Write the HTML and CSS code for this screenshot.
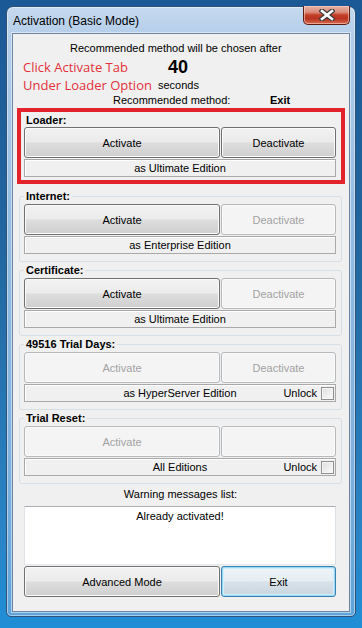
FILE: index.html
```html
<!DOCTYPE html>
<html lang="en">
<head>
<meta charset="utf-8">
<title>Activation (Basic Mode)</title>
<link rel="stylesheet" href="styles.css">
</head>
<body>
<div class="window">
  <div class="titlebar">
    <span class="title">Activation (Basic Mode)</span>
    <button class="close" aria-label="Close">
      <svg width="16" height="12" viewBox="0 0 16 12">
        <path d="M3 2 L13 10 M13 2 L3 10" stroke="#3b3b3b" stroke-width="5" stroke-linecap="square" fill="none"/>
        <path d="M3 2 L13 10 M13 2 L3 10" stroke="#ffffff" stroke-width="2.6" stroke-linecap="square" fill="none"/>
      </svg>
    </button>
  </div>
  <div class="client">
    <div class="intro">Recommended method will be chosen after</div>
    <div class="countdown">
      <span class="note">Click Activate Tab</span><span class="count">40</span>
      <span class="note">Under Loader Option</span><span class="secs">seconds</span>
    </div>
    <div class="recommend"><span class="rec-label">Recommended method:</span><span class="rec-value">Exit</span></div>

    <div class="highlight">
      <fieldset class="loader">
        <legend>Loader:</legend>
        <div class="btn-row"><button class="btn">Activate</button><button class="btn">Deactivate</button></div>
        <div class="edition"><span></span><span>as Ultimate Edition</span><span></span></div>
      </fieldset>
    </div>

    <fieldset class="group">
      <legend>Internet:</legend>
      <div class="btn-row"><button class="btn">Activate</button><button class="btn" disabled>Deactivate</button></div>
      <div class="edition"><span></span><span>as Enterprise Edition</span><span></span></div>
    </fieldset>

    <fieldset class="group">
      <legend>Certificate:</legend>
      <div class="btn-row"><button class="btn">Activate</button><button class="btn" disabled>Deactivate</button></div>
      <div class="edition"><span></span><span>as Ultimate Edition</span><span></span></div>
    </fieldset>

    <fieldset class="group">
      <legend>49516 Trial Days:</legend>
      <div class="btn-row"><button class="btn" disabled>Activate</button><button class="btn" disabled>Deactivate</button></div>
      <div class="edition"><span></span><span>as HyperServer Edition</span><span class="unlock">Unlock<span class="check"></span></span></div>
    </fieldset>

    <fieldset class="group">
      <legend>Trial Reset:</legend>
      <div class="btn-row"><button class="btn" disabled>Activate</button><button class="btn" disabled></button></div>
      <div class="edition"><span></span><span>All Editions</span><span class="unlock">Unlock<span class="check"></span></span></div>
    </fieldset>

    <div class="warn-title">Warning messages list:</div>
    <div class="messages">Already activated!</div>
    <div class="btn-row bottom-row"><button class="btn">Advanced Mode</button><button class="btn default">Exit</button></div>
  </div>
</div>
</body>
</html>
```

FILE: styles.css
```css
html, body {
  margin: 0;
  padding: 0;
}

body {
  width: 362px;
  height: 628px;
  overflow: hidden;
  background: linear-gradient(180deg, #1b5996 0%, #22679f 40%, #2a84c6 85%, #1f8ed6 100%);
  font-family: "Liberation Sans", Arial, sans-serif;
  font-size: 11px;
  color: #000;
}

.window {
  box-sizing: border-box;
  width: 350px;
  height: 611px;
  margin: 6px 0 0 6px;
  border: 1px solid #2f5277;
  border-radius: 7px 7px 5px 5px;
  background: linear-gradient(180deg, #c6d9ee 0px, #b3cde9 30px, #94bde3 200px, #7fb1df 450px, #5ea4da 100%);
  padding: 0 5px 4px;
  display: flex;
  flex-direction: column;
  box-shadow: inset 0 0 0 1px rgba(255, 255, 255, 0.45);
}

.titlebar {
  height: 26px;
  display: flex;
  align-items: flex-start;
  justify-content: space-between;
}

.title {
  padding-left: 1px;
  margin-top: 7px;
  font-family: "Liberation Sans", Arial, sans-serif;
  font-size: 12px;
  line-height: 14px;
  color: #000;
}

.close {
  width: 47px;
  height: 19px;
  margin-top: -1px;
  padding: 0;
  border: 1px solid #5b1d12;
  border-top: none;
  border-radius: 0 0 5px 5px;
  background: linear-gradient(180deg, #e8b2a6 0%, #d98a79 35%, #c43f27 50%, #b93421 70%, #d9694d 100%);
  box-shadow: inset 0 0 0 1px rgba(255, 220, 210, 0.55);
  display: flex;
  align-items: center;
  justify-content: center;
}

.client {
  flex: 1;
  box-sizing: border-box;
  background: #f0f0f0;
  border: 1px solid #6a84a2;
  box-shadow: 0 0 0 1px rgba(255, 255, 255, 0.5);
  padding: 0 7px 0 6px;
  display: flex;
  flex-direction: column;
}

.intro {
  margin-top: 8px;
  height: 13px;
  line-height: 13px;
  padding-left: 51px;
}

.countdown {
  margin-top: 3px;
  padding-left: 4px;
  display: grid;
  grid-template-columns: 135px 40px;
  grid-template-rows: 19px 16px;
  align-items: center;
}

.note {
  color: #e3303b;
  font-family: "Open Sans", "Liberation Sans", sans-serif;
  font-size: 13px;
  line-height: 17px;
  white-space: nowrap;
}

.count {
  text-align: center;
  font-weight: bold;
  font-size: 18px;
  line-height: 19px;
}

.secs {
  text-align: center;
  line-height: 16px;
}

.recommend {
  margin-top: 1px;
  height: 13px;
  line-height: 13px;
  padding-left: 94px;
  display: flex;
}

.rec-label {
  width: 157px;
}

.rec-value {
  font-weight: bold;
}

.highlight {
  margin: 1px -3px 0 -2px;
  border: 4px solid #e3232b;
  padding: 2px 5px 3px 3px;
}

fieldset {
  margin: 0;
  min-width: 0;
}

legend {
  padding: 0 2px;
  font-weight: bold;
  line-height: 13px;
}

.loader {
  border: none;
  padding: 0;
}

.group {
  margin-top: 2px;
  border: 1px solid #d5dfe5;
  border-radius: 3px;
  padding: 1px 5px 7px 4px;
}

.highlight + .group {
  margin-top: 6px;
}

.btn-row {
  display: grid;
  grid-template-columns: 196px 115px;
  column-gap: 1px;
}

.btn {
  height: 31px;
  box-sizing: border-box;
  padding: 0;
  margin: 0;
  border: 1px solid #707070;
  border-radius: 3px;
  background: linear-gradient(180deg, #f2f2f2 0%, #ebebeb 48%, #dddddd 52%, #cfcfcf 100%);
  box-shadow: inset 0 0 0 1px #fbfbfb;
  font-family: "Liberation Sans", Arial, sans-serif;
  font-size: 11px;
  color: #000;
}

.btn:disabled {
  border-color: #b5b9bc;
  background: #f4f4f4;
  box-shadow: inset 0 0 0 1px #fafafa;
  color: #a2a2a2;
}

.btn.default {
  border-color: #3c7fb1;
  background: linear-gradient(180deg, #eef4f8 0%, #e6eef3 48%, #d7e1e8 52%, #c9d6df 100%);
  box-shadow: inset 0 0 0 1px #98d8f5, inset 0 0 0 2px #cdeefb;
}

.edition {
  margin-top: 1px;
  height: 18px;
  box-sizing: border-box;
  border: 1px solid #a9a9a9;
  box-shadow: inset 1px 1px 0 #ffffff;
  display: grid;
  grid-template-columns: 1fr auto 1fr;
  align-items: center;
  line-height: 16px;
  white-space: nowrap;
}

.unlock {
  justify-self: end;
  display: flex;
  align-items: center;
  gap: 4px;
  padding-right: 1px;
}

.check {
  width: 13px;
  height: 13px;
  box-sizing: border-box;
  border: 1px solid #8e8f8f;
  background: linear-gradient(135deg, #dcdcdc 0%, #f0f0f0 60%, #fbfbfb 100%);
  box-shadow: inset 0 0 0 1px #f6f6f6;
}

.warn-title {
  margin-top: 4px;
  line-height: 13px;
  text-align: center;
}

.messages {
  margin: 5px 6px 0 5px;
  height: 59px;
  box-sizing: border-box;
  background: #ffffff;
  border: 1px solid;
  border-color: #abadb3 #dbdfe6 #e3e9ef #e2e3ea;
  padding-top: 3px;
  line-height: 13px;
  text-align: center;
}

.bottom-row {
  margin: 1px 6px 0 5px;
}
```
